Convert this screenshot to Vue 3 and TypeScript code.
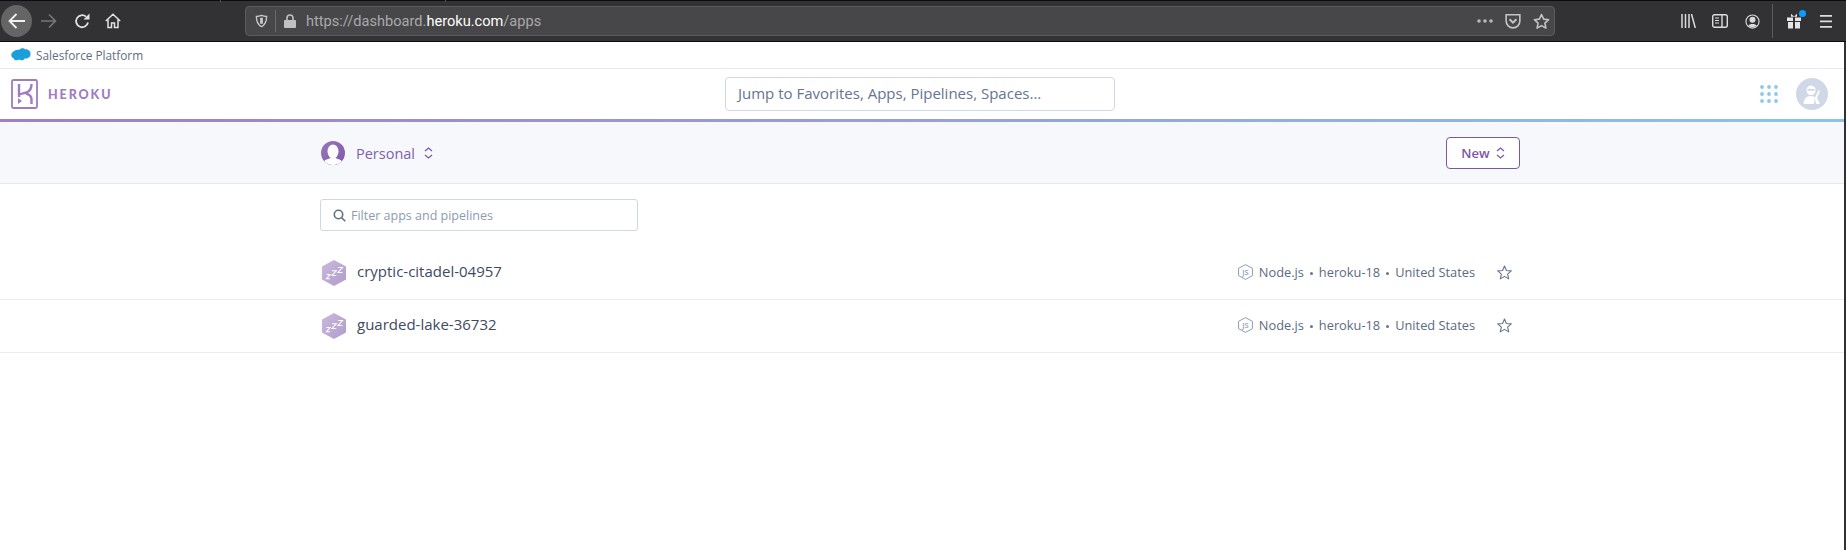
<script setup lang="ts">
type App = { id: string; name: string; stack: string; region: string };

const apps: App[] = [
  { id: "a", name: "cryptic-citadel-04957", stack: "heroku-18", region: "United States" },
  { id: "b", name: "guarded-lake-36732", stack: "heroku-18", region: "United States" },
];
</script>

<template>
  <div class="page">
    <div class="toolbar">
      <i class="tick tick-a"></i>
      <i class="tick tick-b"></i>
      <div class="nav">
        <span class="back">
          <svg width="18" height="18" viewBox="0 0 18 18" fill="none" stroke="#f0f0f0" stroke-width="1.8">
            <path d="M1.500 9h15.500M8.500 2 1.500 9l7 7" />
          </svg>
        </span>
        <svg class="forward" width="16" height="16" viewBox="0 0 16 16" fill="none" stroke="#77777a" stroke-width="1.6">
          <path d="M0 8h14.500M8 1.500 14.500 8 8 14.500" />
        </svg>
        <svg class="reload" width="16" height="16" viewBox="0 0 16 16" fill="none" stroke="#e2e2e3" stroke-width="1.8">
          <path d="M14 9.500A6 6 0 1 1 12 3.600" />
          <path d="M15.500 .5v6h-6z" fill="#e2e2e3" stroke="none" />
        </svg>
        <svg class="home" width="16" height="16" viewBox="0 0 16 16" fill="none" stroke="#e2e2e3" stroke-width="1.500">
          <path d="M.8 8 8 1.200 15.200 8M3 6.500v8h3.500v-4.500h3v4.500H13v-8" />
        </svg>
      </div>
      <div class="urlbar">
        <svg class="shield" width="13" height="14" viewBox="0 0 14 14" fill="none" stroke="#c8c8ca" stroke-width="1.500">
          <path d="M7 1c2 .8 3.800 1.100 5.500 1.100 0 5-1.500 8.900-5.500 10.900C3 11 1.500 7.100 1.500 2.100 3.200 2.100 5 1.800 7 1z" />
          <path d="M7 3.500v6.500" stroke-width="3" />
        </svg>
        <span class="url-sep"></span>
        <svg class="lock" width="12" height="14" viewBox="0 0 12 14">
          <path d="M1 6h10a1 1 0 0 1 1 1v6a1 1 0 0 1-1 1H1a1 1 0 0 1-1-1V7a1 1 0 0 1 1-1z" fill="#c0c0c2" />
          <path d="M3 6.500V4a3 3 0 0 1 6 0v2.500" fill="none" stroke="#c0c0c2" stroke-width="1.600" />
        </svg>
        <span class="url">https://dashboard.<b>heroku.com</b>/apps</span>
        <span class="url-actions">
          <svg width="16" height="4" viewBox="0 0 16 4" fill="#b8b8ba">
            <circle cx="2" cy="2" r="1.800" />
            <circle cx="8" cy="2" r="1.800" />
            <circle cx="14" cy="2" r="1.800" />
          </svg>
          <svg width="16" height="16" viewBox="0 0 14 14" fill="none" stroke="#c4c4c6" stroke-width="1.400">
            <path d="M1 1.500h12v5.500a6 6 0 0 1-12 0z" />
            <path d="M4 5.500 7 8.500l3-3" stroke-width="1.700" />
          </svg>
          <svg width="17" height="17" viewBox="0 0 15 15" fill="none" stroke="#c4c4c6" stroke-width="1.400">
            <path d="M7.500 1.300 9.400 5.400l4.400.5-3.300 3 .9 4.400-3.900-2.200-3.900 2.200.9-4.400-3.300-3 4.400-.5z" stroke-linejoin="round" />
          </svg>
        </span>
      </div>
      <div class="tools">
        <svg class="t-library" width="15" height="14" viewBox="0 0 15 14" fill="none" stroke="#dcdcde" stroke-width="1.500">
          <path d="M1 0v14M4.500 0v14M8 0v14M10.500 0l3.800 14" />
        </svg>
        <svg class="t-sidebar" width="16" height="14" viewBox="0 0 16 14" fill="none" stroke="#dcdcde" stroke-width="1.400">
          <rect x=".7" y=".7" width="14.600" height="12.600" rx="2" />
          <path d="M10 .7v12.600" />
          <path d="M3 4h4M3 6.500h4M3 9h4" stroke-width="1" />
        </svg>
        <svg class="t-account" width="15" height="15" viewBox="0 0 16 16" fill="none" stroke="#dcdcde" stroke-width="1.200">
          <circle cx="8" cy="8" r="7" />
          <circle cx="8" cy="6" r="2.600" fill="#dcdcde" />
          <path d="M3.500 12.500c1-2.500 8-2.500 9 0-2 2-7 2-9 0z" fill="#dcdcde" stroke="none" />
        </svg>
        <span class="tool-sep"></span>
        <span class="gift">
          <svg width="14" height="16" viewBox="0 0 14 16" fill="#e4e4e6">
            <path d="M0 4.500h6V8H0zM8 4.500h6V8H8zM1 9h5v6.500H1zM8 9h5v6.500H8zM4 .8 7 3.500 10 .8v3H4z" />
          </svg>
          <i class="dot"></i>
        </span>
        <svg class="t-menu" width="12" height="13" viewBox="0 0 12 13" fill="#dcdcde">
          <path d="M0 0h12v1.800H0zM0 5.500h12v1.800H0zM0 11h12v1.800H0z" />
        </svg>
      </div>
    </div>

    <div class="viewport">
      <div class="platform">
        <svg width="20" height="14" viewBox="0 0 17 12" fill="#1b9fdc">
          <path d="M7 1.500C8 .3 10.500-.5 12 1.200c2-.3 4.700 1 4.700 4 0 3-3 4.400-5 3.700-1 1.800-3.500 2-4.700 1C4.800 11.200 2.500 10.500 2 8.600.3 8.300-.4 5.800.7 4.300 1.500 2.800 4.500 1 7 1.500z" />
        </svg>
        <span>Salesforce Platform</span>
      </div>

      <header class="masthead">
        <div class="brand">
          <svg width="27" height="30" viewBox="0 0 27 30" fill="none">
            <rect x="1" y="1" width="25" height="28" rx="1.500" stroke="#9e7cc1" stroke-width="1.800" />
            <path d="M8 5v13" stroke="#9e7cc1" stroke-width="2.400" />
            <path d="M20.500 5c0 4-1 6.500-4 8-2.500 1.200-5.500 1.300-8.500 2.500M15 14.500c3.500 1 5.500 3 5.500 6V25" stroke="#9e7cc1" stroke-width="2.400" />
            <path d="M7 19 11 22 7 25z" fill="#9e7cc1" />
          </svg>
          <span class="wordmark">HEROKU</span>
        </div>
        <div class="jump">Jump to Favorites, Apps, Pipelines, Spaces...</div>
        <div class="mast-right">
          <svg width="18" height="18" viewBox="0 0 18 18" fill="#8dc8ea">
            <template v-for="y in [2, 9, 16]" :key="y">
              <circle v-for="x in [2, 9, 16]" :key="x" :cx="x" :cy="y" r="1.900" />
            </template>
          </svg>
          <span class="avatar">
            <svg width="20" height="20" viewBox="0 0 20 20" fill="#fff">
              <path d="M4.500 6c0-6 9-6 9 0 0 3-1.500 5-4.500 5S4.500 9 4.500 6z" />
              <path d="M1.500 20c0-5 3-8 7-8 2 0 3.500 .5 4.500 1.500l-1 6.500z" />
              <path d="M13 13.500 16.500 6l1.500.7-3 7.300 3 6h-4z" />
              <path d="M5.500 5h7v1.700h-7z" fill="#d0d8e8" />
            </svg>
          </span>
        </div>
      </header>
      <div class="rainbow"></div>

      <div class="subbar">
        <div class="inner subbar-inner">
          <div class="account">
            <span class="account-pic">
              <svg width="24" height="24" viewBox="0 0 24 24" fill="#fff">
                <ellipse cx="12" cy="10.500" rx="5.500" ry="7" />
                <path d="M3 20.500c1.500-2.500 5.500-2.500 7-4h4c1.500 1.500 5.500 1.500 7 4a13 13 0 0 1-18 0z" />
              </svg>
            </span>
            <span class="account-name">Personal</span>
            <svg class="updown" width="9" height="12" viewBox="0 0 9 12" fill="none" stroke="#7c5aa6" stroke-width="1.300">
              <path d="M1 4 4.500 1 8 4M1 8l3.500 3L8 8" />
            </svg>
          </div>
          <button class="new-btn">
            New
            <svg width="9" height="12" viewBox="0 0 9 12" fill="none" stroke="#7c5aa6" stroke-width="1.300">
              <path d="M1 4 4.500 1 8 4M1 8l3.500 3L8 8" />
            </svg>
          </button>
        </div>
      </div>

      <div class="inner filter-wrap">
        <div class="filter">
          <svg width="13" height="13" viewBox="0 0 13 13" fill="none" stroke="#5f6f89" stroke-width="1.600">
            <circle cx="5.500" cy="5.500" r="4.200" />
            <path d="m8.700 8.700 3.600 3.600" />
          </svg>
          <span>Filter apps and pipelines</span>
        </div>
      </div>

      <ul class="app-list">
        <li v-for="app in apps" :key="app.id" class="app-row">
          <div class="inner row-inner">
            <svg class="hex" width="24" height="26" viewBox="0 0 24 26">
              <defs>
                <linearGradient :id="'hex-' + app.id" x1="0" y1="0" x2="1" y2="1">
                  <stop offset="0" stop-color="#c9b9dd" />
                  <stop offset="1" stop-color="#b09ccb" />
                </linearGradient>
              </defs>
              <path d="M12 0 24 6.500v13L12 26 0 19.500v-13z" :fill="'url(#hex-' + app.id + ')'" />
              <path d="M4.500 14.500H8L4.500 18.700H8M10 10.800h4.300L10 15.500h4.300M16 7.500h4.500L16 12.500h4.500" fill="none" stroke="#fff" stroke-width="1.100" />
            </svg>
            <span class="app-name">{{ app.name }}</span>
            <span class="app-meta">
              <svg class="node" width="15" height="16" viewBox="0 0 15 16">
                <path d="M7.500 .6 14.400 4.300v7.400L7.500 15.400 .6 11.700V4.300z" fill="none" stroke="#8f9db3" stroke-width="1" />
                <text x="7.500" y="10.700" text-anchor="middle" class="node-label">JS</text>
              </svg>
              <span class="meta-text">Node.js</span>
              <i class="bullet"></i>
              <span class="meta-text">{{ app.stack }}</span>
              <i class="bullet"></i>
              <span class="meta-text">{{ app.region }}</span>
            </span>
            <svg class="star" width="15" height="15" viewBox="0 0 15 15" fill="none" stroke="#66758f" stroke-width="1.100">
              <path d="M7.500 1 9.400 5.500l4.900.4-3.700 3.200 1.100 4.800-4.200-2.500-4.200 2.500 1.100-4.800L.7 5.900l4.900-.4z" stroke-linejoin="round" />
            </svg>
          </div>
        </li>
      </ul>
    </div>
  </div>
</template>

<style>
html,
body {
  margin: 0;
  background: #fff;
}
</style>

<style scoped>
.page {
  height: 550px;
  overflow: hidden;
  display: flex;
  flex-direction: column;
  font-family: "Open Sans", "Noto Sans", sans-serif;
  background: #fff;
}

.toolbar {
  position: relative;
  height: 40px;
  flex: none;
  display: flex;
  align-items: center;
  background: #323234;
  border-top: 1px solid #0c0c0d;
  border-bottom: 1px solid #0c0c0d;
}

.tick {
  position: absolute;
  top: -1px;
  width: 1px;
  height: 2px;
  background: #55555a;
}

.tick-a {
  left: 220px;
}

.tick-b {
  left: 445px;
}

.nav {
  width: 245px;
  display: flex;
  align-items: center;
  flex: none;
}

.back {
  width: 31px;
  height: 32px;
  margin-left: 1px;
  border-radius: 50%;
  background: #656566;
  display: flex;
  align-items: center;
  justify-content: center;
}

.forward {
  margin-left: 9px;
}

.reload {
  margin-left: 17px;
}

.home {
  margin-left: 15px;
}

.urlbar {
  width: 1310px;
  height: 30px;
  box-sizing: border-box;
  display: flex;
  align-items: center;
  flex: none;
  background: #474749;
  border: 1px solid #5c5c5e;
  border-radius: 4px;
}

.shield {
  margin-left: 9px;
}

.url-sep {
  width: 1px;
  height: 22px;
  margin-left: 7px;
  background: #6a6a6c;
}

.lock {
  margin-left: 8px;
}

.url {
  margin-left: 10px;
  font-family: Roboto, sans-serif;
  font-size: 14.600px;
  color: #a9a9ab;
}

.url b {
  font-weight: 400;
  color: #fff;
}

.url-actions {
  margin-left: auto;
  margin-right: 4px;
  display: flex;
  align-items: center;
  gap: 12px;
}

.tools {
  flex: 1;
  display: flex;
  align-items: center;
  padding-left: 126px;
}

.t-sidebar {
  margin-left: 16px;
}

.t-account {
  margin-left: 17px;
}

.tool-sep {
  width: 1px;
  height: 34px;
  margin-left: 12px;
  background: #5c5c5e;
}

.gift {
  position: relative;
  display: flex;
  margin-left: 14px;
}

.t-menu {
  margin-left: 19px;
}

.dot {
  position: absolute;
  top: -3px;
  right: -5px;
  width: 7px;
  height: 7px;
  border-radius: 50%;
  background: #0a9dff;
}

.viewport {
  flex: 1;
  border-right: 2px solid #323234;
}

.platform {
  height: 27px;
  box-sizing: border-box;
  padding-left: 11px;
  display: flex;
  align-items: center;
  gap: 5px;
  border-bottom: 1px solid #e6eaf3;
  font-size: 11.800px;
  color: #5f6d84;
}

.masthead {
  height: 50px;
  display: flex;
  align-items: center;
  position: relative;
  padding: 0 16px 0 11px;
}

.brand {
  display: flex;
  align-items: center;
  gap: 10px;
}

.wordmark {
  font-family: "Lato", sans-serif;
  font-size: 12.500px;
  font-weight: 900;
  letter-spacing: 1.900px;
  color: #9e7cc1;
}

.jump {
  position: absolute;
  left: 725px;
  top: 8px;
  width: 390px;
  height: 34px;
  box-sizing: border-box;
  padding: 0 0 2px 12px;
  display: flex;
  align-items: center;
  border: 1px solid #cfd7e6;
  border-radius: 4px;
  font-size: 15px;
  color: #66758f;
}

.mast-right {
  margin-left: auto;
  display: flex;
  align-items: center;
  gap: 18px;
}

.avatar {
  width: 32px;
  height: 32px;
  border-radius: 50%;
  background: #d0d8e8;
  display: flex;
  align-items: center;
  justify-content: center;
}

.rainbow {
  height: 3px;
  background: linear-gradient(to right, #a07fc3, #8cc4e4);
}

.inner {
  margin-left: 320px;
  width: 1200px;
}

.subbar {
  height: 62px;
  box-sizing: border-box;
  background: #f7f8fb;
  border-bottom: 1px solid #e6e9f1;
}

.subbar-inner {
  height: 61px;
  display: flex;
  align-items: center;
  justify-content: space-between;
}

.account {
  display: flex;
  align-items: center;
  padding-left: 1px;
}

.account-pic {
  width: 24px;
  height: 24px;
  border-radius: 50%;
  background: linear-gradient(135deg, #9a78bd, #7c5aa6);
  overflow: hidden;
  display: flex;
}

.account-name {
  margin-left: 11px;
  padding-top: 1px;
  font-size: 14.500px;
  color: #7f5fab;
}

.updown {
  margin-left: 9px;
}

.new-btn {
  width: 74px;
  height: 32px;
  padding: 0;
  display: flex;
  align-items: center;
  justify-content: center;
  gap: 6px;
  background: #fff;
  border: 1px solid #79589f;
  border-radius: 4px;
  font-family: inherit;
  font-size: 13px;
  font-weight: 600;
  color: #79589f;
}

.filter-wrap {
  padding-top: 15px;
}

.filter {
  width: 318px;
  height: 32px;
  box-sizing: border-box;
  padding-left: 12px;
  display: flex;
  align-items: center;
  gap: 5px;
  border: 1px solid #cfd7e6;
  border-radius: 3px;
  font-size: 12.500px;
  color: #8d9bb1;
}

.app-list {
  list-style: none;
  margin: 16px 0 0;
  padding: 0;
}

.app-row {
  height: 53px;
  box-sizing: border-box;
  border-bottom: 1px solid #e9ecf2;
}

.row-inner {
  height: 52px;
  display: flex;
  align-items: center;
}

.hex {
  margin-left: 2px;
}

.app-name {
  margin-left: 11px;
  padding-bottom: 4px;
  font-size: 15px;
  color: #3f4a5f;
}

.app-meta {
  margin-left: auto;
  display: flex;
  align-items: center;
  font-size: 12.800px;
  color: #5b6a82;
}

.meta-text {
  padding-bottom: 2px;
}

.node {
  margin: 0 6px 3px 0;
}

.node-label {
  font-family: "Open Sans", sans-serif;
  font-size: 7.500px;
  font-weight: 600;
  fill: #8f9db3;
}

.bullet {
  width: 3px;
  height: 3px;
  margin: 0 6px;
  border-radius: 50%;
  background: #66758f;
}

.star {
  margin: 0 8px 1px 22px;
}
</style>
